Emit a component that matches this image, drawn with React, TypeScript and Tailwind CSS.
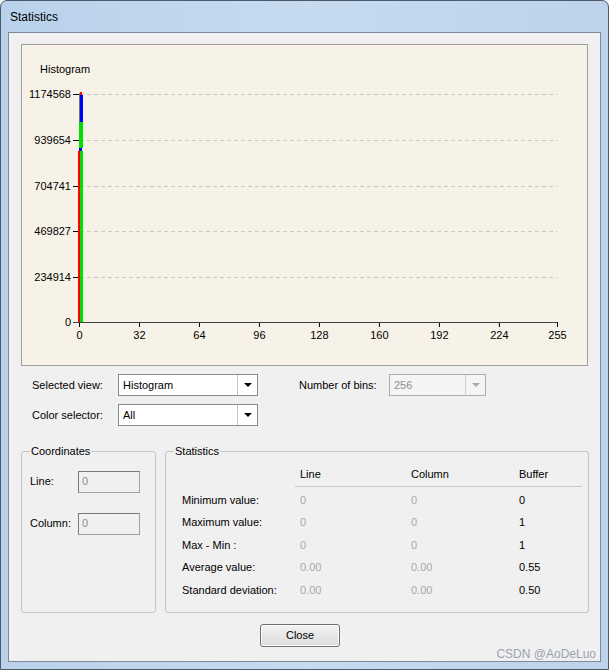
import React from 'react';

const yTicks = [
  { v: '1174568', y: 49 },
  { v: '939654', y: 95 },
  { v: '704741', y: 141 },
  { v: '469827', y: 186 },
  { v: '234914', y: 232 },
  { v: '0', y: 277 },
];

const xTicks = ['0', '32', '64', '96', '128', '160', '192', '224', '255'];

const rows = [
  { label: 'Minimum value:', line: '0', col: '0', buf: '0' },
  { label: 'Maximum value:', line: '0', col: '0', buf: '1' },
  { label: 'Max - Min :', line: '0', col: '0', buf: '1' },
  { label: 'Average value:', line: '0.00', col: '0.00', buf: '0.55' },
  { label: 'Standard deviation:', line: '0.00', col: '0.00', buf: '0.50' },
];

// offsets of the svg inside the panel
const OX = 22;
const OY = 45;

const Histogram = () => {
  const x0 = 79 - OX;
  const x1 = 557 - OX;
  const yb = 322 - OY;
  return (
    <svg width="565" height="320" className="block">
      <text x={40 - OX} y={73 - OY} fontSize="11" fontFamily="Liberation Sans, sans-serif" fill="#000">
        Histogram
      </text>
      {yTicks.map((t) => (
        <g key={t.v}>
          {t.v !== '0' && (
            <line x1={x0 + 1} x2={x1} y1={t.y + 0.5} y2={t.y + 0.5} stroke="#c8c8c8" strokeDasharray="4 3" />
          )}
          <line x1={x0 - 6} x2={x0} y1={t.y + 0.5} y2={t.y + 0.5} stroke="#000" />
          <text x={x0 - 8} y={t.y + 4} fontSize="11" textAnchor="end" fontFamily="Liberation Sans, sans-serif" fill="#000">
            {t.v}
          </text>
        </g>
      ))}
      {xTicks.map((t) => {
        const x = x0 + (Number(t) * (x1 - x0)) / 255;
        return (
          <g key={t}>
            <line x1={x + 0.5} x2={x + 0.5} y1={yb} y2={yb + 5} stroke="#000" />
            <text x={x + 0.5} y={yb + 17} fontSize="11" textAnchor="middle" fontFamily="Liberation Sans, sans-serif" fill="#000">
              {t}
            </text>
          </g>
        );
      })}
      <line x1={x0 + 0.5} x2={x0 + 0.5} y1={48} y2={yb} stroke="#707070" />
      {/* bin 0 bars */}
      <rect x={80 - OX} y={92 - OY} width={2} height={3} fill="#ff0000" />
      <rect x={80 - OX} y={95 - OY} width={3} height={27} fill="#0000ff" />
      <rect x={79 - OX} y={122 - OY} width={4} height={26} fill="#00e000" />
      <rect x={79 - OX} y={148 - OY} width={3} height={3} fill="#0000ff" />
      <rect x={78 - OX} y={151 - OY} width={2} height={322 - 151} fill="#ff0000" />
      <rect x={80 - OX} y={151 - OY} width={3} height={322 - 151} fill="#00e000" />
      <line x1={x0 - 6} x2={x1} y1={yb + 0.5} y2={yb + 0.5} stroke="#404040" />
    </svg>
  );
};

const Combo = ({ value, width, disabled }: { value: string; width: string; disabled?: boolean }) => (
  <div
    className={`flex h-[22px] ${width} border ${disabled ? 'border-[#adadad] bg-[#f4f4f4] text-[#8d8d8d]' : 'border-[#8a8a8a] bg-white text-black'}`}
  >
    <div className="flex flex-1 items-center pl-[4px]">{value}</div>
    <div className={`flex w-[20px] items-center justify-center border-l ${disabled ? 'border-[#d0d0d0]' : 'border-[#c4c4c4]'}`}>
      <div
        className={`h-0 w-0 border-x-[4px] border-t-[4px] border-x-transparent ${disabled ? 'border-t-[#a8a8a8]' : 'border-t-black'}`}
      />
    </div>
  </div>
);

const TextBox = ({ value }: { value: string }) => (
  <div className="flex h-[22px] w-[62px] items-center border border-[#a0a0a0] border-t-[#7a7a7a] border-l-[#7a7a7a] bg-[#f0f0f0] pl-[3px] text-[#8d8d8d]">
    {value}
  </div>
);

export default function App() {
  return (
    <div className="h-[670px] w-[609px] overflow-hidden bg-[#f0f0f0] font-[family-name:'Liberation_Sans',sans-serif] text-[11px] text-black">
      <div className="flex h-[670px] w-[609px] flex-col rounded-t-[7px] border border-[#4d5a6a] bg-gradient-to-r from-[#b9d1ea] via-[#c6dbf0] to-[#bcd3eb]">
        <div className="flex h-[31px] items-center pl-[9px] text-[12px] text-black">Statistics</div>
        <div className="mx-[7px] flex flex-1 flex-col border border-[#7d8a99] bg-[#f0f0f0]">
          <div className="ml-[12px] mt-[11px] h-[322px] w-[567px] border border-[#a0a0a0] bg-[#f6f2e8]">
            <Histogram />
          </div>

          <div className="ml-[23px] mt-[8px] flex items-center">
            <span className="w-[86px]">Selected view:</span>
            <Combo value="Histogram" width="w-[140px]" />
            <span className="ml-[41px] w-[90px]">Number of bins:</span>
            <Combo value="256" width="w-[97px]" disabled />
          </div>
          <div className="ml-[23px] mt-[8px] flex items-center">
            <span className="w-[86px]">Color selector:</span>
            <Combo value="All" width="w-[140px]" />
          </div>

          <div className="ml-[12px] mt-[17px] flex gap-[9px]">
            <fieldset className="h-[170px] w-[135px] rounded-[3px] border border-[#c4c4c4] px-[8px]">
              <legend className="px-[1px]">Coordinates</legend>
              <div className="mt-[11px] flex items-center">
                <span className="w-[48px]">Line:</span>
                <TextBox value="0" />
              </div>
              <div className="mt-[20px] flex items-center">
                <span className="w-[48px]">Column:</span>
                <TextBox value="0" />
              </div>
            </fieldset>
            <fieldset className="h-[170px] w-[424px] rounded-[3px] border border-[#c4c4c4] pl-[8px] pr-[6px]">
              <legend className="px-[1px]">Statistics</legend>
              <div className="ml-[8px] mt-[6px] flex">
                <div className="w-[113px]" />
                <div className="flex flex-1 border-b border-[#c8c8c8] pb-[4px] pl-[5px]">
                  <span className="w-[111px]">Line</span>
                  <span className="w-[108px]">Column</span>
                  <span>Buffer</span>
                </div>
              </div>
              <div className="ml-[8px] mt-[2px] flex flex-col">
                {rows.map((r) => (
                  <div key={r.label} className="flex h-[22.4px] items-center">
                    <span className="w-[118px]">{r.label}</span>
                    <span className="w-[111px] text-[#a8a8a8]">{r.line}</span>
                    <span className="w-[108px] text-[#a8a8a8]">{r.col}</span>
                    <span>{r.buf}</span>
                  </div>
                ))}
              </div>
            </fieldset>
          </div>

          <div className="mt-[11px] flex justify-center">
            <button className="mr-[9px] h-[23px] w-[80px] rounded-[3px] border border-[#707070] bg-gradient-to-b from-[#f2f2f2] to-[#dcdcdc] text-[11px] shadow-[inset_0_0_0_1px_#fbfbfb]">
              Close
            </button>
          </div>
          <div className="mt-auto flex justify-end pr-[4px] text-[12px] leading-[14px] text-[#9aa3ad]">CSDN @AoDeLuo</div>
        </div>
        <div className="h-[7px]" />
      </div>
    </div>
  );
}
